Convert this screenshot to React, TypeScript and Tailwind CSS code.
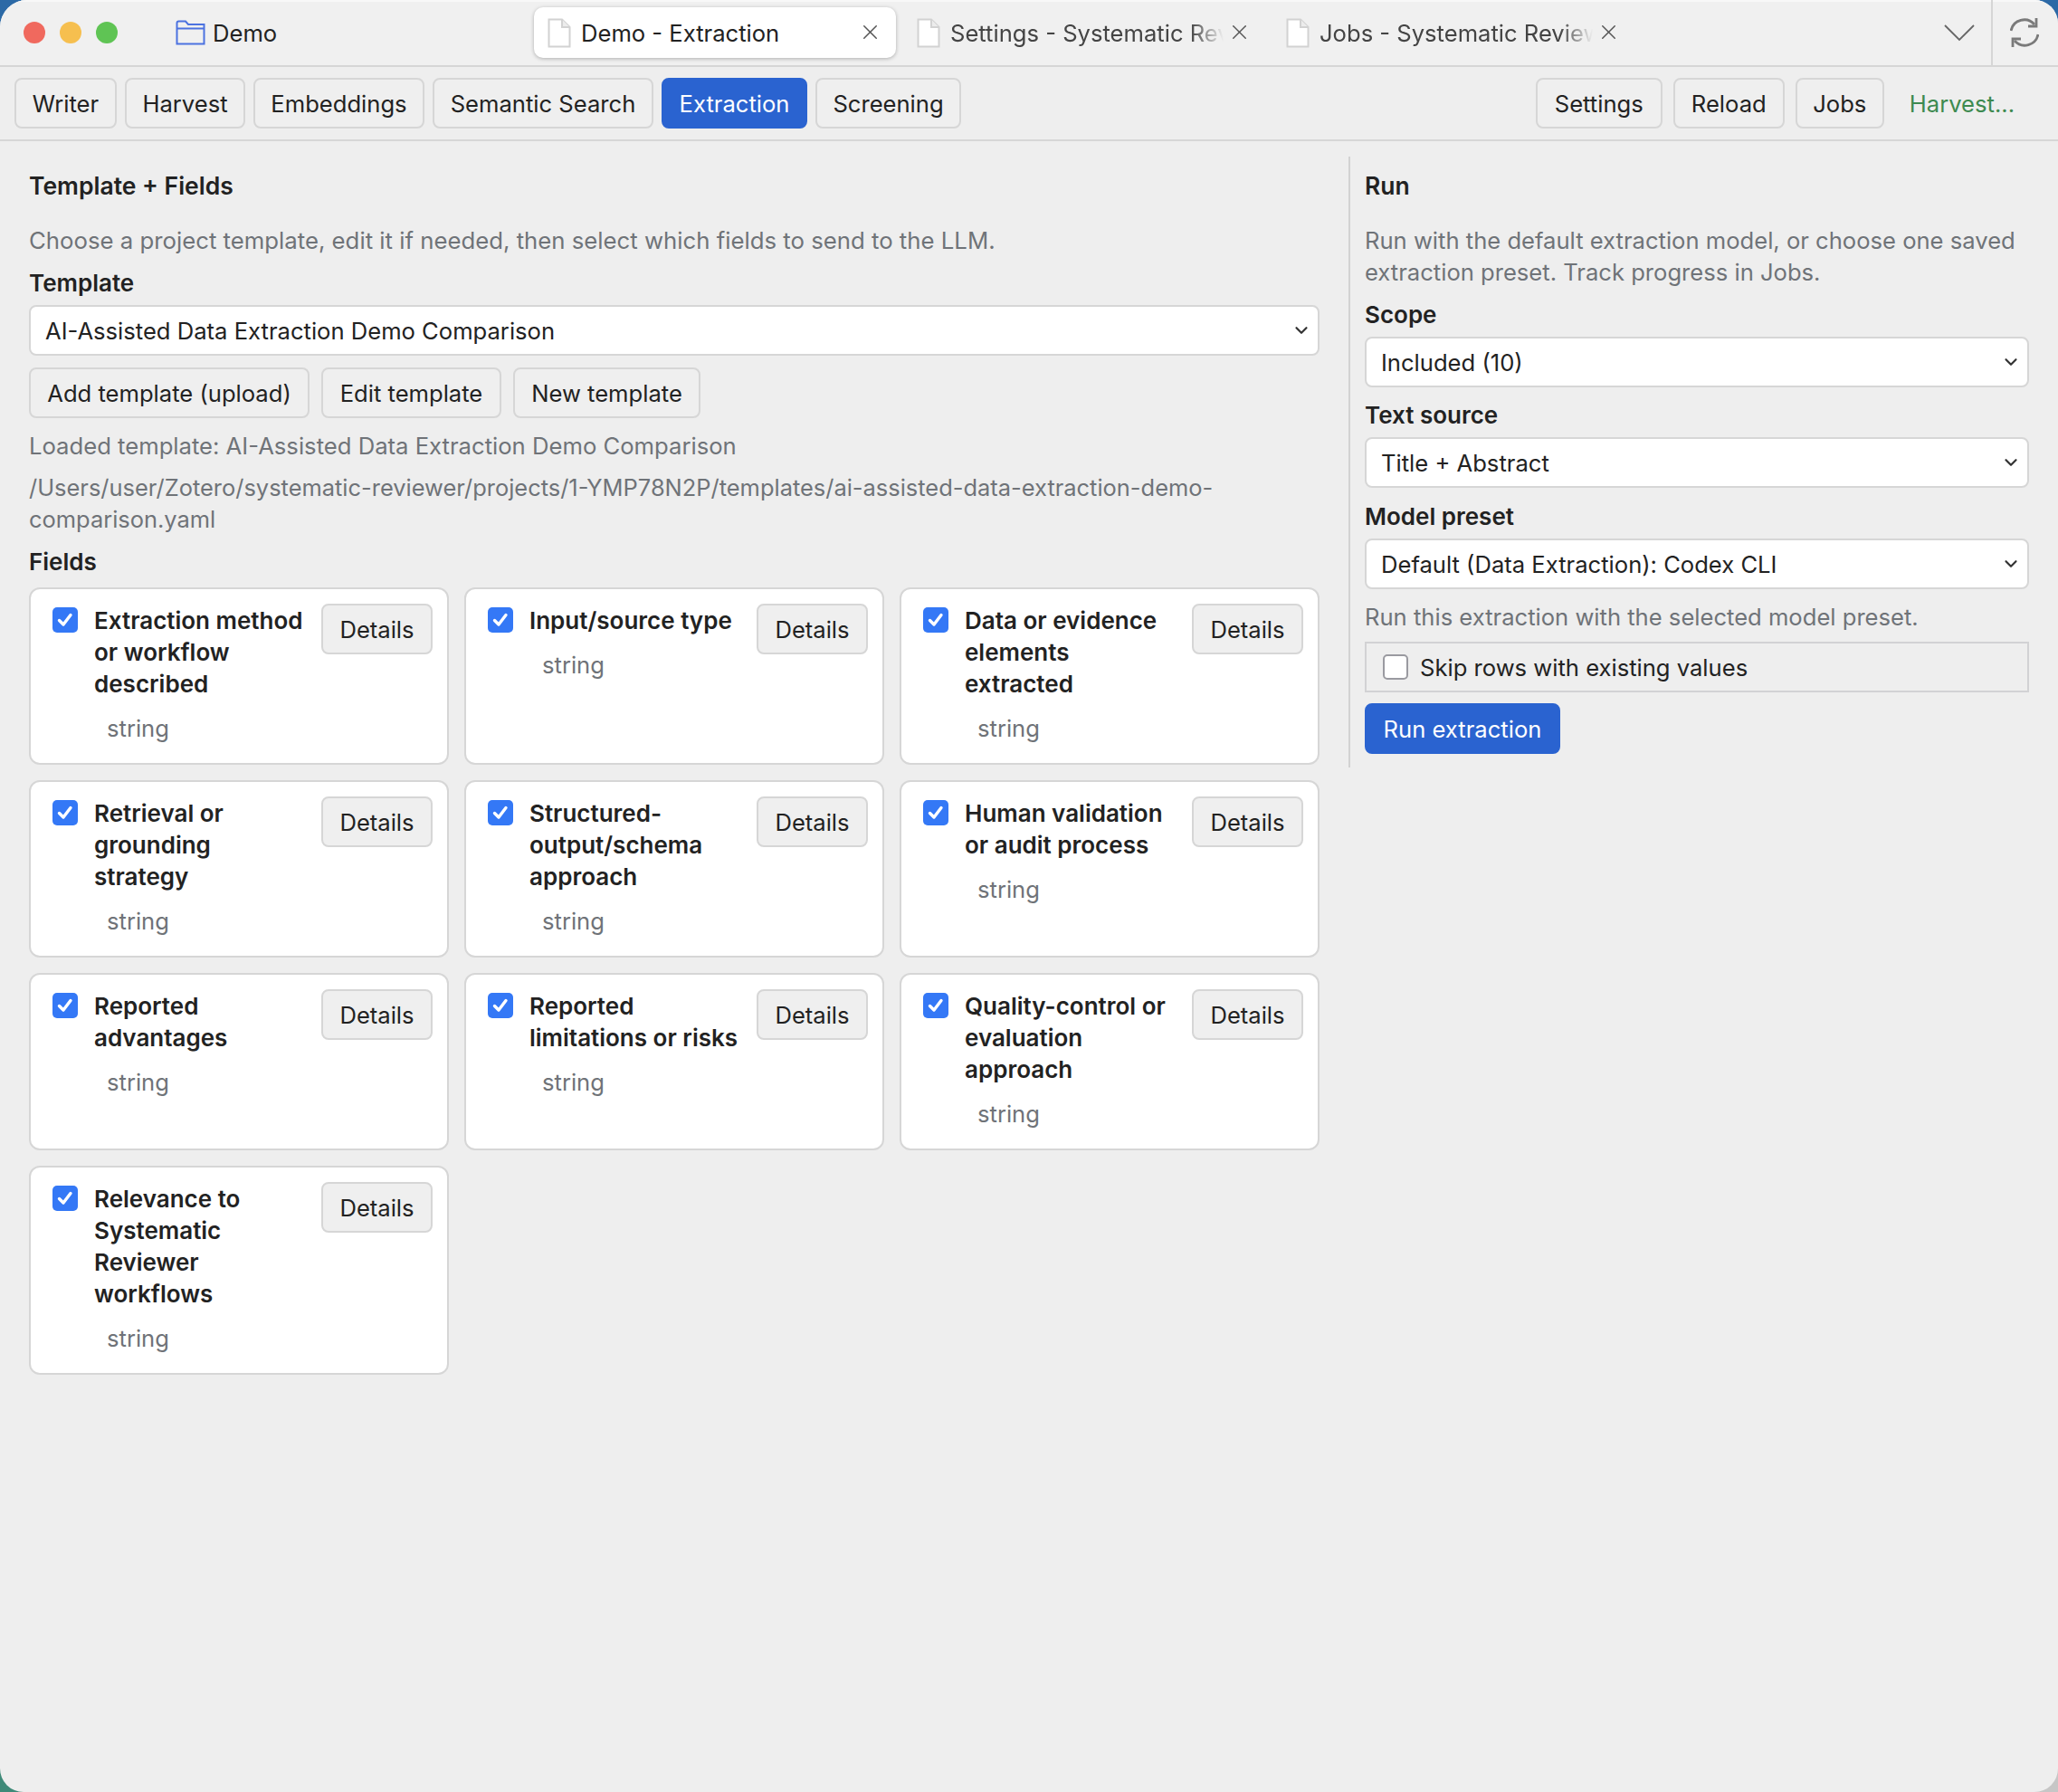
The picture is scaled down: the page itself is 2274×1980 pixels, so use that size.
import { useState } from "react";
import { ChevronDown, X } from "lucide-react";

const navTabs = [
  { label: "Writer", w: "w-[113px]" },
  { label: "Harvest", w: "w-[133px]" },
  { label: "Embeddings", w: "w-[189px]" },
  { label: "Semantic Search", w: "w-[244px]" },
  { label: "Extraction", w: "w-[161px]", active: true },
  { label: "Screening", w: "w-[161px]" },
];

const fields = [
  "Extraction method or workflow described",
  "Input/source type",
  "Data or evidence elements extracted",
  "Retrieval or grounding strategy",
  "Structured-output/schema approach",
  "Human validation or audit process",
  "Reported advantages",
  "Reported limitations or risks",
  "Quality-control or evaluation approach",
  "Relevance to Systematic Reviewer workflows",
];

function DocIcon() {
  return (
    <svg width="26" height="33" viewBox="0 0 26 33" className="shrink-0" fill="none">
      <path d="M1.5 1.5H16L24.5 10V31.5H1.5Z" fill="#fff" stroke="#d2d2d2" strokeWidth="2" />
      <path d="M16 1.5V10H24.5" fill="#ececec" stroke="#d2d2d2" strokeWidth="2" />
    </svg>
  );
}

function FolderIcon() {
  return (
    <svg width="33" height="28" viewBox="0 0 33 28" className="shrink-0" fill="none" stroke="#4c72e0" strokeWidth="2">
      <path d="M1.5 26.5V3.5Q1.5 1.5 3.5 1.5H11L14 5H31.5V26.5Z" />
      <path d="M1.5 9.5H31.5" />
    </svg>
  );
}

function SyncIcon() {
  return (
    <svg width="32" height="32" viewBox="0 0 32 32" fill="none" stroke="#7a7a7a" strokeWidth="2.8">
      <path d="M1 14A15 15 0 0 1 27 7" />
      <path d="M29 0V9H20" />
      <path d="M31 18A15 15 0 0 1 5 25" />
      <path d="M3 32V23H12" />
    </svg>
  );
}

function WindowTab({ label, active }: { label: string; active?: boolean }) {
  return (
    <div
      className={`relative flex h-[56px] w-[400px] items-center pl-[15px] ${
        active ? "rounded-[10px] bg-white text-[#222] shadow-[0_1px_4px_rgba(0,0,0,0.28)]" : "text-[#444]"
      }`}
    >
      <DocIcon />
      <span
        className={`ml-[11px] w-[302px] overflow-hidden whitespace-nowrap ${
          active ? "" : "[mask-image:linear-gradient(to_right,black_88%,transparent_100%)]"
        }`}
      >
        {label}
      </span>
      <X size={27} strokeWidth={1.3} color="#555" className="absolute left-[358px] top-[14px]" />
    </div>
  );
}

function Btn({ label, className = "", primary }: { label: string; className?: string; primary?: boolean }) {
  return (
    <button
      className={`flex h-[56px] items-center justify-center whitespace-nowrap rounded-[8px] border-2 ${
        primary ? "border-[#2a63d0] bg-[#2a63d0] text-white" : "border-[#d6d6d6] bg-[#efefef] text-[#222]"
      } ${className}`}
    >
      {label}
    </button>
  );
}

function Selector({ value }: { value: string }) {
  return (
    <div className="relative">
      <select
        defaultValue={value}
        className="h-[56px] w-full appearance-none rounded-[8px] border-2 border-[#d6d6d6] bg-white pl-[16px] text-[#222] outline-none"
      >
        <option>{value}</option>
      </select>
      <ChevronDown size={22} strokeWidth={2.4} color="#333" className="absolute right-[9px] top-[17px]" />
    </div>
  );
}

function FieldCard({ title }: { title: string }) {
  const [checked, setChecked] = useState(true);
  return (
    <div className="flex items-start justify-between rounded-[12px] border-2 border-[#d6d6d6] bg-white pb-[21px] pl-[24px] pr-[16px] pt-[16px]">
      <div className="flex min-w-0">
        <button
          onClick={() => setChecked(!checked)}
          className={`mt-[4px] flex h-[28px] w-[28px] shrink-0 items-center justify-center rounded-[5px] ${
            checked ? "bg-[#3478f6]" : "border-2 border-[#999] bg-white"
          }`}
        >
          {checked && (
            <svg width="20" height="20" viewBox="0 0 20 20" fill="none" stroke="#fff" strokeWidth="3.4" strokeLinecap="round" strokeLinejoin="round">
              <path d="M3.5 10.5L8 15L16 4.5" />
            </svg>
          )}
        </button>
        <div className="ml-[18px] mt-[1px] w-[236px]">
          <div className="text-[26px] font-semibold leading-[35px] text-[#222]">{title}</div>
          <div className="ml-[14px] mt-[14px] leading-[35px] text-[#6f7378]">string</div>
        </div>
      </div>
      <Btn label="Details" className="w-[123px] shrink-0" />
    </div>
  );
}

export default function App() {
  return (
    <div
      className="relative h-[1980px] w-[2274px] bg-[linear-gradient(180deg,#2c69a6_0%,#2f7f8f_60%,#3f8a78_100%)] text-[25.6px] leading-[35px] text-[#222]"
      style={{ fontFamily: "Inter, 'Noto Sans', sans-serif" }}
    >
      <span className="absolute bottom-0 right-0 h-[40px] w-[40px] bg-[#c6c6c6]" />
      <div className="relative flex h-full flex-col overflow-hidden rounded-b-[26px] rounded-tl-[30px] rounded-tr-[26px] bg-[#eeeeee]">
        {/* window tabs */}
        <div className="flex h-[74px] shrink-0 items-center border-b-2 border-[#d6d6d6] bg-[#f0f0f0] pl-[26px] shadow-[inset_0_2px_0_#f8f8f8]">
          <span className="h-[24px] w-[24px] rounded-full bg-[#f0695e]" />
          <span className="ml-[16px] h-[24px] w-[24px] rounded-full bg-[#f6bf4f]" />
          <span className="ml-[16px] h-[24px] w-[24px] rounded-full bg-[#5fc454]" />
          <div className="ml-[64px] flex w-[396px] items-center gap-[8px]">
            <FolderIcon />
            <span>Demo</span>
          </div>
          <div className="flex gap-[8px]">
            <WindowTab label="Demo - Extraction" active />
            <WindowTab label="Settings - Systematic Review" />
            <WindowTab label="Jobs - Systematic Reviewer" />
          </div>
          <div className="ml-[342px] flex h-full items-center">
            <svg width="34" height="20" viewBox="0 0 34 20" fill="none" stroke="#666" strokeWidth="1.8">
              <path d="M1 2L17 18L33 2" />
            </svg>
            <div className="ml-[18px] h-full w-[2px] bg-[#d6d6d6]" />
            <div className="ml-[19px]">
              <SyncIcon />
            </div>
          </div>
        </div>

        {/* app toolbar */}
        <div className="flex h-[82px] shrink-0 items-center justify-between border-b-2 border-[#d6d6d6] pl-[16px] pr-[48px]">
          <div className="flex gap-[9px]">
            {navTabs.map((t) => (
              <Btn key={t.label} label={t.label} primary={t.active} className={t.w} />
            ))}
          </div>
          <div className="flex items-center gap-[12px]">
            <Btn label="Settings" className="w-[140px]" />
            <Btn label="Reload" className="w-[123px]" />
            <Btn label="Jobs" className="w-[98px]" />
            <span className="ml-[16px] text-[#3d8a50]">Harvest...</span>
          </div>
        </div>

        <div className="flex items-start">
          {/* template + fields */}
          <div className="ml-[32px] w-[1426px] pt-[32px]">
            <div className="text-[26.5px] font-semibold">Template + Fields</div>
            <p className="mt-[25px] text-[25.75px] text-[#6f7378]">Choose a project template, edit it if needed, then select which fields to send to the LLM.</p>
            <div className="mt-[12px] text-[26px] font-semibold">Template</div>
            <div className="mt-[7px]">
              <Selector value="AI-Assisted Data Extraction Demo Comparison" />
            </div>
            <div className="mt-[13px] flex gap-[13px]">
              <Btn label="Add template (upload)" className="w-[310px]" />
              <Btn label="Edit template" className="w-[199px]" />
              <Btn label="New template" className="w-[207px]" />
            </div>
            <p className="mt-[13px] text-[25.65px] text-[#6f7378]">Loaded template: AI-Assisted Data Extraction Demo Comparison</p>
            <p className="mt-[11px] text-[25.45px] text-[#6f7378]">
              /Users/user/Zotero/systematic-reviewer/projects/1-YMP78N2P/templates/ai-assisted-data-extraction-demo-comparison.yaml
            </p>
            <div className="mt-[12px] text-[26px] font-semibold">Fields</div>
            <div className="mt-[11px] grid grid-cols-3 gap-[17px]">
              {fields.map((f) => (
                <FieldCard key={f} title={f} />
              ))}
            </div>
          </div>

          {/* run panel */}
          <div className="ml-[32px] mt-[17px] w-[752px] border-l-2 border-[#d2d2d2] pb-[15px] pl-[16px] pt-[15px]">
            <div className="text-[26.5px] font-semibold">Run</div>
            <p className="mt-[25px] text-[#6f7378]">Run with the default extraction model, or choose one saved extraction preset. Track progress in Jobs.</p>
            <div className="mt-[12px] text-[26px] font-semibold">Scope</div>
            <div className="mt-[7px]">
              <Selector value="Included (10)" />
            </div>
            <div className="mt-[13px] text-[26px] font-semibold">Text source</div>
            <div className="mt-[7px]">
              <Selector value="Title + Abstract" />
            </div>
            <div className="mt-[14px] text-[26px] font-semibold">Model preset</div>
            <div className="mt-[7px]">
              <Selector value="Default (Data Extraction): Codex CLI" />
            </div>
            <p className="mt-[13px] text-[#6f7378]">Run this extraction with the selected model preset.</p>
            <label className="mt-[10px] flex h-[56px] items-center border-2 border-[#d2d2d4] pl-[18px]">
              <span className="h-[28px] w-[28px] rounded-[5px] border-2 border-[#9a9aa0] bg-white" />
              <span className="ml-[13px]">Skip rows with existing values</span>
            </label>
            <Btn label="Run extraction" primary className="mt-[12px] w-[216px]" />
          </div>
        </div>
      </div>
    </div>
  );
}
